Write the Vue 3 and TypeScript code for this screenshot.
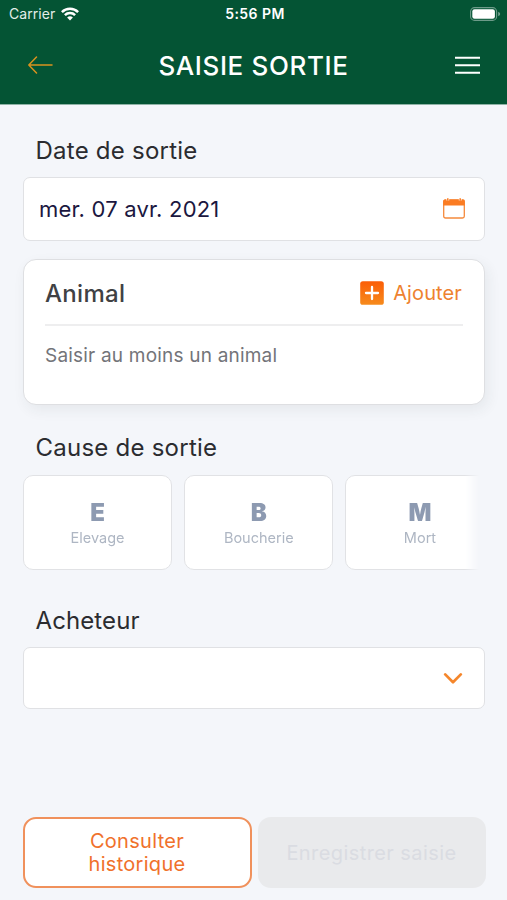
<script setup lang="ts">
interface Cause {
  code: string
  label: string
}

const causes: Cause[] = [
  { code: 'E', label: 'Elevage' },
  { code: 'B', label: 'Boucherie' },
  { code: 'M', label: 'Mort' },
]
</script>

<template>
  <div class="screen">
    <header class="header">
      <div class="status">
        <div class="carrier">
          <span class="carrier-name">Carrier</span>
          <svg class="wifi" width="18" height="14" viewBox="0 0 18 14">
            <g fill="none" stroke="#fff" stroke-width="2.5">
              <path d="M0.9 5.1a11.5 11.5 0 0 1 16.2 0" />
              <path d="M3.9 8.2a7.2 7.2 0 0 1 10.2 0" />
            </g>
            <path d="M9 13.6 6.1 10.6a4.1 4.1 0 0 1 5.8 0Z" fill="#fff" />
          </svg>
        </div>
        <span class="clock">5:56 PM</span>
        <svg class="battery" width="31" height="14" viewBox="0 0 31 14">
          <rect x="0.6" y="0.6" width="26" height="12.8" rx="4" fill="none" stroke="#fff" stroke-opacity=".42" stroke-width="1.1" />
          <rect x="2.3" y="2.3" width="22.6" height="9.4" rx="2.2" fill="#fff" />
          <path d="M28.2 4.8q2 .8 2 2.2t-2 2.2Z" fill="#fff" fill-opacity=".45" />
        </svg>
      </div>
      <div class="nav">
        <svg class="back" width="26" height="18" viewBox="0 0 26 18" fill="none" stroke="#d9921f" stroke-width="1.5" stroke-linecap="round" stroke-linejoin="round">
          <path d="M9.5 1 1.8 9l7.7 8M1.8 9h23.2" />
        </svg>
        <h1 class="title">SAISIE SORTIE</h1>
        <svg class="menu" width="26" height="20" viewBox="0 0 26 20" stroke="#fff" stroke-width="2">
          <path d="M1 2.7h25M1 10.2h25M1 17.7h25" />
        </svg>
      </div>
    </header>

    <main class="content">
      <h2 class="label">Date de sortie</h2>
      <div class="field date">
        <span class="date-value">mer. 07 avr. 2021</span>
        <svg width="22" height="21" viewBox="0 0 22 21">
          <rect x="0.7" y="2" width="20.6" height="18" rx="1.8" fill="#fff" stroke="#f58a3c" stroke-width="1.3" />
          <path d="M0.2 7.6V3.2a1.8 1.8 0 0 1 1.8-1.8h18a1.8 1.8 0 0 1 1.8 1.8v4.4Z" fill="#fb7c22" />
          <path d="M4.8 0v2.6M17.2 0v2.6" stroke="#fff" stroke-width="2.8" />
          <path d="M4.8.3v2.4M17.2.3v2.4" stroke="#fb7c22" stroke-width="1.5" />
        </svg>
      </div>

      <section class="card">
        <div class="card-head">
          <h3 class="card-title">Animal</h3>
          <div class="add">
            <svg width="24" height="24" viewBox="0 0 24 24">
              <defs>
                <linearGradient id="addFill" x1="0" y1="0" x2="0" y2="1">
                  <stop offset="0" stop-color="#fb5d07" />
                  <stop offset="1" stop-color="#f68b1c" />
                </linearGradient>
              </defs>
              <rect x="0.2" y="0.2" width="23.6" height="23.6" rx="2.6" fill="url(#addFill)" />
              <path d="M12 6v12M6 12h12" stroke="#fff" stroke-width="2.3" stroke-linecap="round" />
            </svg>
            <span class="add-text">Ajouter</span>
          </div>
        </div>
        <p class="hint">Saisir au moins un animal</p>
      </section>

      <h2 class="label label-cause">Cause de sortie</h2>
      <div class="causes">
        <div v-for="cause in causes" :key="cause.code" class="cause">
          <span class="code">{{ cause.code }}</span>
          <span class="cause-label">{{ cause.label }}</span>
        </div>
      </div>

      <h2 class="label label-buyer">Acheteur</h2>
      <div class="field select">
        <svg width="20" height="12" viewBox="0 0 20 12" fill="none" stroke="#f5862b" stroke-width="2.7" stroke-linecap="round" stroke-linejoin="round">
          <path d="M2.2 2.4 10 10.2l7.8-7.8" />
        </svg>
      </div>
    </main>

    <footer class="actions">
      <button class="button outline"><span>Consulter<br />historique</span></button>
      <button class="button disabled" disabled><span>Enregistrer saisie</span></button>
    </footer>
  </div>
</template>

<style>
body {
  margin: 0;
  background: #f4f6fa;
}
</style>

<style scoped>
.screen {
  box-sizing: border-box;
  display: flex;
  flex-direction: column;
  width: 507px;
  height: 900px;
  overflow: hidden;
  background: #f4f6fa;
  font-family: Inter, "Liberation Sans", sans-serif;
}
svg {
  display: block;
  flex: none;
}
h1, h2, h3, p {
  margin: 0;
}
span, h1, h2, h3, p {
  white-space: nowrap;
}
.header {
  box-sizing: border-box;
  height: 105px;
  border-bottom: 1px solid #8fb3a6;
  background: #045434;
  color: #fff;
}
.status {
  display: grid;
  grid-template-columns: 1fr auto 1fr;
  align-items: center;
  height: 27px;
  padding: 0 6px 0 9px;
}
.carrier {
  display: flex;
  align-items: center;
  gap: 6px;
}
.carrier-name {
  font-size: 14px;
  line-height: 27px;
  letter-spacing: 0.05px;
  color: #e3eee9;
}
.clock {
  font-size: 14px;
  font-weight: 600;
  letter-spacing: 0.45px;
}
.battery {
  justify-self: end;
}
.nav {
  display: grid;
  grid-template-columns: 1fr auto 1fr;
  align-items: center;
  height: 76px;
  padding: 0 27px;
}
.title {
  padding-top: 2px;
  font-size: 26px;
  font-weight: 500;
  line-height: 32px;
  letter-spacing: 0.63px;
}
.menu {
  justify-self: end;
}
.content {
  flex: 1;
  padding: 31px 22px 0 23px;
}
.label {
  margin-left: 12.5px;
  font-size: 24px;
  line-height: 30px;
  font-weight: 400;
  letter-spacing: 0.24px;
  color: #2b2c30;
}
.field {
  box-sizing: border-box;
  display: flex;
  align-items: center;
  background: #fff;
  border: 1.5px solid #e0e1e4;
  border-radius: 7px;
}
.date {
  justify-content: space-between;
  height: 64px;
  margin-top: 11px;
  padding: 0 19px 1px 15px;
}
.date-value {
  font-size: 22px;
  letter-spacing: 0.2px;
  color: #1b1740;
}
.card {
  box-sizing: border-box;
  height: 146px;
  margin-top: 18px;
  padding: 0 21px;
  background: #fff;
  border: 1px solid #dedfe2;
  border-radius: 13px;
  box-shadow: 3px 5px 14px rgba(40, 50, 60, 0.07);
}
.card-head {
  box-sizing: border-box;
  display: flex;
  justify-content: space-between;
  align-items: center;
  height: 66px;
  padding-top: 2px;
  border-bottom: 2px solid #eeeeef;
}
.card-title {
  font-size: 24px;
  font-weight: 500;
  letter-spacing: 0.3px;
  color: #404144;
}
.add {
  display: flex;
  align-items: center;
  gap: 9px;
  padding-right: 1px;
}
.add-text {
  font-size: 20px;
  letter-spacing: 0.12px;
  color: #ee822f;
}
.hint {
  margin-top: 17px;
  font-size: 19px;
  line-height: 26px;
  letter-spacing: 0.2px;
  color: #737479;
}
.label-cause {
  margin-top: 28px;
}
.causes {
  display: flex;
  gap: 12px;
  width: 458px;
  height: 96px;
  margin-top: 12px;
  overflow: hidden;
  -webkit-mask-image: linear-gradient(to right, #000 442px, transparent 456px);
  mask-image: linear-gradient(to right, #000 442px, transparent 456px);
}
.cause {
  box-sizing: border-box;
  flex: 0 0 149.2px;
  display: flex;
  flex-direction: column;
  align-items: center;
  height: 95px;
  padding-top: 22px;
  background: #fff;
  border: 1.5px solid #e1e2e5;
  border-radius: 10px;
}
.code {
  font-size: 24px;
  line-height: 30px;
  font-weight: 900;
  color: #8d9ab1;
}
.cause-label {
  font-size: 14.5px;
  line-height: 20px;
  color: #aeb6c3;
}
.label-buyer {
  margin-top: 35px;
  letter-spacing: 0.1px;
}
.select {
  justify-content: flex-end;
  height: 62px;
  margin-top: 11px;
  padding-right: 21px;
}
.actions {
  display: grid;
  grid-template-columns: 229px 228px;
  gap: 6px;
  height: 71px;
  padding: 0 21.5px 12px 22.5px;
}
.button {
  box-sizing: border-box;
  padding: 0;
  border: 0;
  border-radius: 13px;
  font-family: inherit;
  font-size: 20px;
  line-height: 23px;
  letter-spacing: 0.3px;
}
.outline {
  background: #fff;
  border: 2px solid #f0915c;
  color: #f0712b;
}
.disabled {
  padding-top: 1px;
  background: #e9eaec;
  color: #dadce2;
  letter-spacing: 0.42px;
}
</style>
